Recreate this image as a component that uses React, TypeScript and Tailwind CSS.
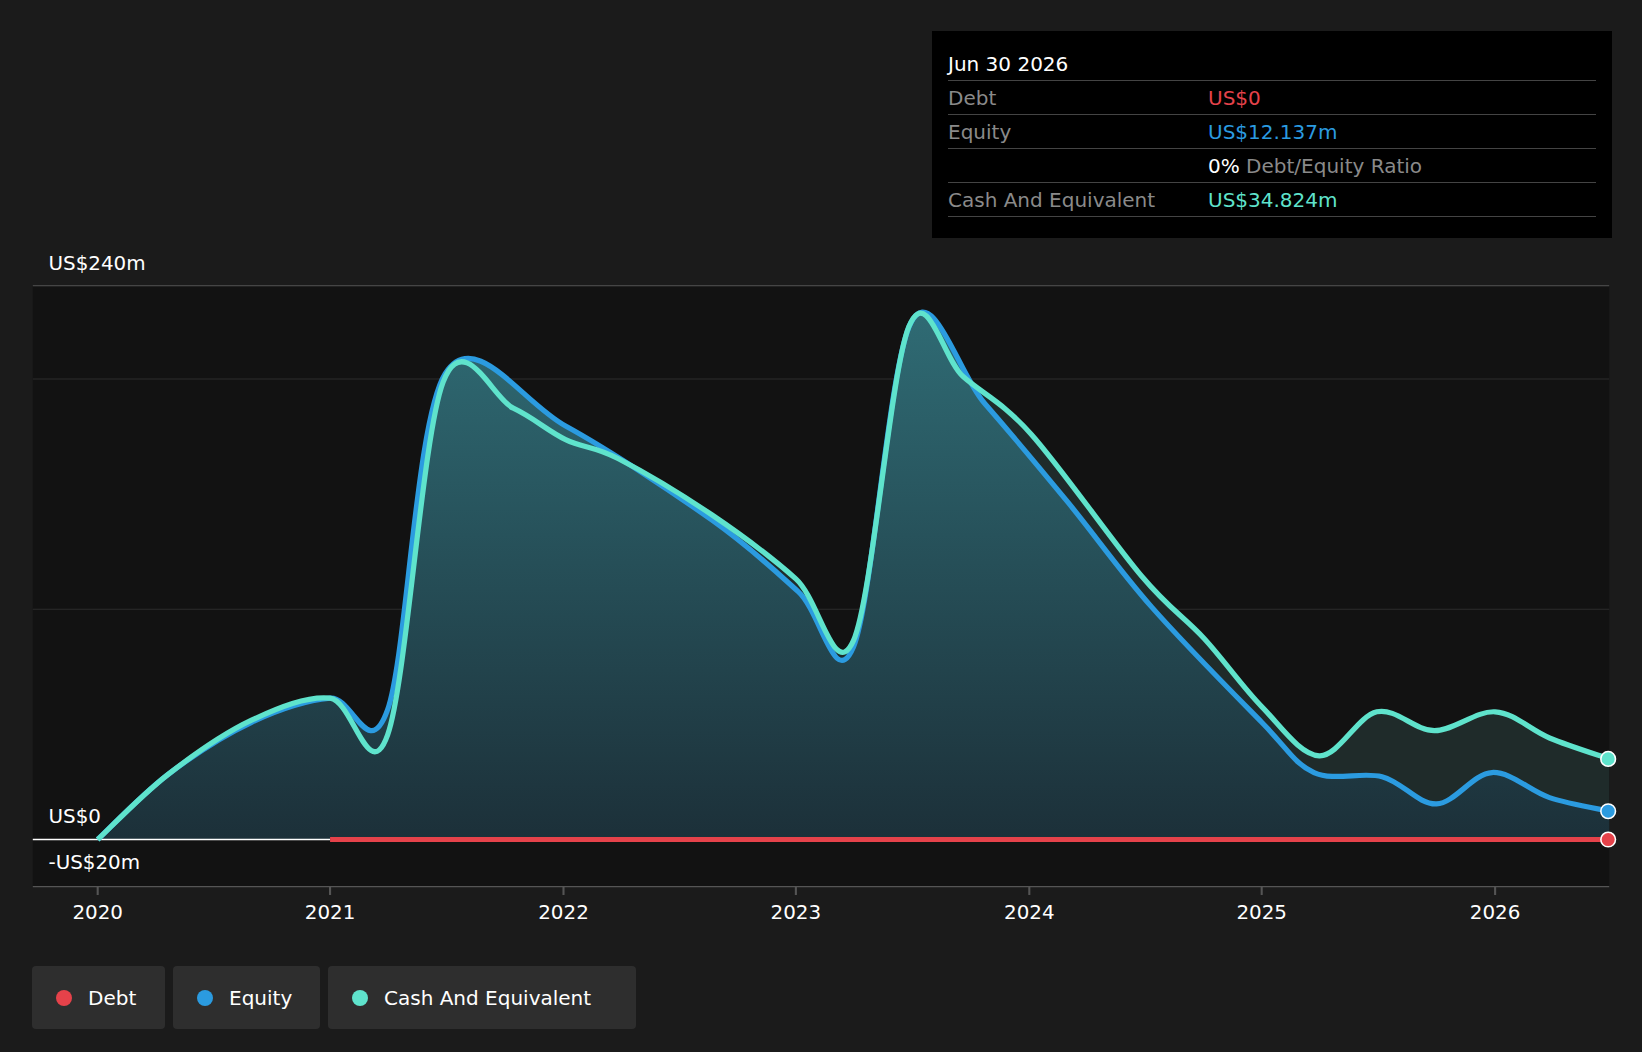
const cash: [number, number][] = [
  [93, 802], [160, 740], [240, 688], [315, 667], [370, 702], [423, 365], [490, 390], [540, 420],
  [590, 438], [680, 492], [760, 553], [815, 612], [868, 312], [920, 360], [985, 415], [1090, 550],
  [1150, 610], [1205, 675], [1260, 722], [1315, 680], [1370, 698], [1428, 680], [1480, 705], [1537, 725],
];
const equity: [number, number][] = [
  [93, 802], [160, 740], [240, 690], [315, 667], [370, 678], [425, 357], [540, 407], [680, 497],
  [762, 565], [815, 618], [870, 308], [940, 385], [1020, 480], [1100, 580], [1205, 690], [1255, 738],
  [1320, 742], [1372, 768], [1425, 738], [1480, 762], [1537, 775],
];

function smooth(p: [number, number][]) {
  let d = `M${p[0][0]},${p[0][1]}`;
  for (let i = 0; i < p.length - 1; i++) {
    const p0 = p[i - 1] || p[i];
    const p1 = p[i];
    const p2 = p[i + 1];
    const p3 = p[i + 2] || p2;
    const c1x = p1[0] + (p2[0] - p0[0]) / 6;
    const c1y = p1[1] + (p2[1] - p0[1]) / 6;
    const c2x = p2[0] - (p3[0] - p1[0]) / 6;
    const c2y = p2[1] - (p3[1] - p1[1]) / 6;
    d += ` C${c1x},${c1y} ${c2x},${c2y} ${p2[0]},${p2[1]}`;
  }
  return d;
}

const years = [
  ["2020", 93], ["2021", 315], ["2022", 538], ["2023", 760], ["2024", 983], ["2025", 1205], ["2026", 1428],
] as const;

function Chart() {
  const c = smooth(cash);
  const e = smooth(equity);
  return (
    <svg viewBox="0 0 1568 1005" width={1642} height={1052} className="absolute inset-0" style={{ fontFamily: "'DejaVu Sans', sans-serif" }}>
      <defs>
        <linearGradient id="eq" x1="0" y1="0" x2="0" y2="1">
          <stop offset="0" stopColor="#2f6b74" />
          <stop offset="1" stopColor="#1c3039" />
        </linearGradient>
      </defs>
      <rect x={31} y={273} width={1506} height={574} fill="#121212" />
      <line x1={31} x2={1537} y1={273} y2={273} stroke="#555" />
      <line x1={31} x2={1537} y1={362} y2={362} stroke="#2c2c2c" />
      <line x1={31} x2={1537} y1={582} y2={582} stroke="#2c2c2c" />
      <line x1={31} x2={1537} y1={847} y2={847} stroke="#555" />
      <path d={`${c} L1537,802 L93,802 Z`} fill="#1f2b2a" />
      <path d={`${e} L1537,802 L93,802 Z`} fill="url(#eq)" />
      <line x1={31} x2={315} y1={802} y2={802} stroke="#fff" strokeWidth={1.5} />
      <path d={e} fill="none" stroke="#2b9be0" strokeWidth={5} />
      <path d={c} fill="none" stroke="#5fe3cc" strokeWidth={5} />
      <line x1={315} x2={1537} y1={802} y2={802} stroke="#e5424a" strokeWidth={5} />
      <circle cx={1536} cy={725} r={7} fill="#5fe3cc" stroke="#fff" strokeWidth={1.5} />
      <circle cx={1536} cy={775} r={7} fill="#2b9be0" stroke="#fff" strokeWidth={1.5} />
      <circle cx={1536} cy={802} r={7} fill="#e5424a" stroke="#fff" strokeWidth={1.5} />
      {years.map(([t, x]) => (
        <g key={t}>
          <line x1={x} x2={x} y1={847} y2={855} stroke="#555" strokeWidth={2} />
          <text x={x} y={878} textAnchor="middle" fill="#fff" fontSize={19}>{t}</text>
        </g>
      ))}
      <text x={46} y={258} fill="#fff" fontSize={19}>US$240m</text>
      <text x={46} y={786} fill="#fff" fontSize={19}>US$0</text>
      <text x={46} y={830} fill="#fff" fontSize={19}>-US$20m</text>
    </svg>
  );
}

function Row({ label, value, color }: { label: string; value: React.ReactNode; color: string }) {
  return (
    <div className="flex h-[34px] items-center border-b border-[#444]">
      <span className="w-[260px] text-[#8a8a8a]">{label}</span>
      <span className={color}>{value}</span>
    </div>
  );
}

export default function App() {
  return (
    <div className="relative h-[1052px] w-[1642px] overflow-hidden bg-[#1b1b1b] text-[20px]" style={{ fontFamily: "'DejaVu Sans', sans-serif" }}>
      <Chart />
      <div className="absolute left-[932px] top-[31px] h-[207px] w-[680px] bg-black px-4 pt-4">
        <div className="flex h-[34px] items-center border-b border-[#444] text-white">Jun 30 2026</div>
        <Row label="Debt" value="US$0" color="text-[#e5424a]" />
        <Row label="Equity" value="US$12.137m" color="text-[#2b9be0]" />
        <Row label="" value={<><span className="text-white">0%</span><span className="text-[#8a8a8a]"> Debt/Equity Ratio</span></>} color="" />
        <Row label="Cash And Equivalent" value="US$34.824m" color="text-[#5fe3cc]" />
      </div>
      <div className="absolute left-[32px] top-[966px] flex gap-2 text-white">
        {[["Debt", "bg-[#e5424a]", "w-[133px]"], ["Equity", "bg-[#2b9be0]", "w-[147px]"], ["Cash And Equivalent", "bg-[#5fe3cc]", "w-[308px]"]].map(([t, c, w]) => (
          <div key={t} className={`flex h-[63px] items-center gap-4 rounded bg-[#2e2e2e] pl-6 ${w}`}>
            <span className={`h-4 w-4 rounded-full ${c}`} />
            {t}
          </div>
        ))}
      </div>
    </div>
  );
}
